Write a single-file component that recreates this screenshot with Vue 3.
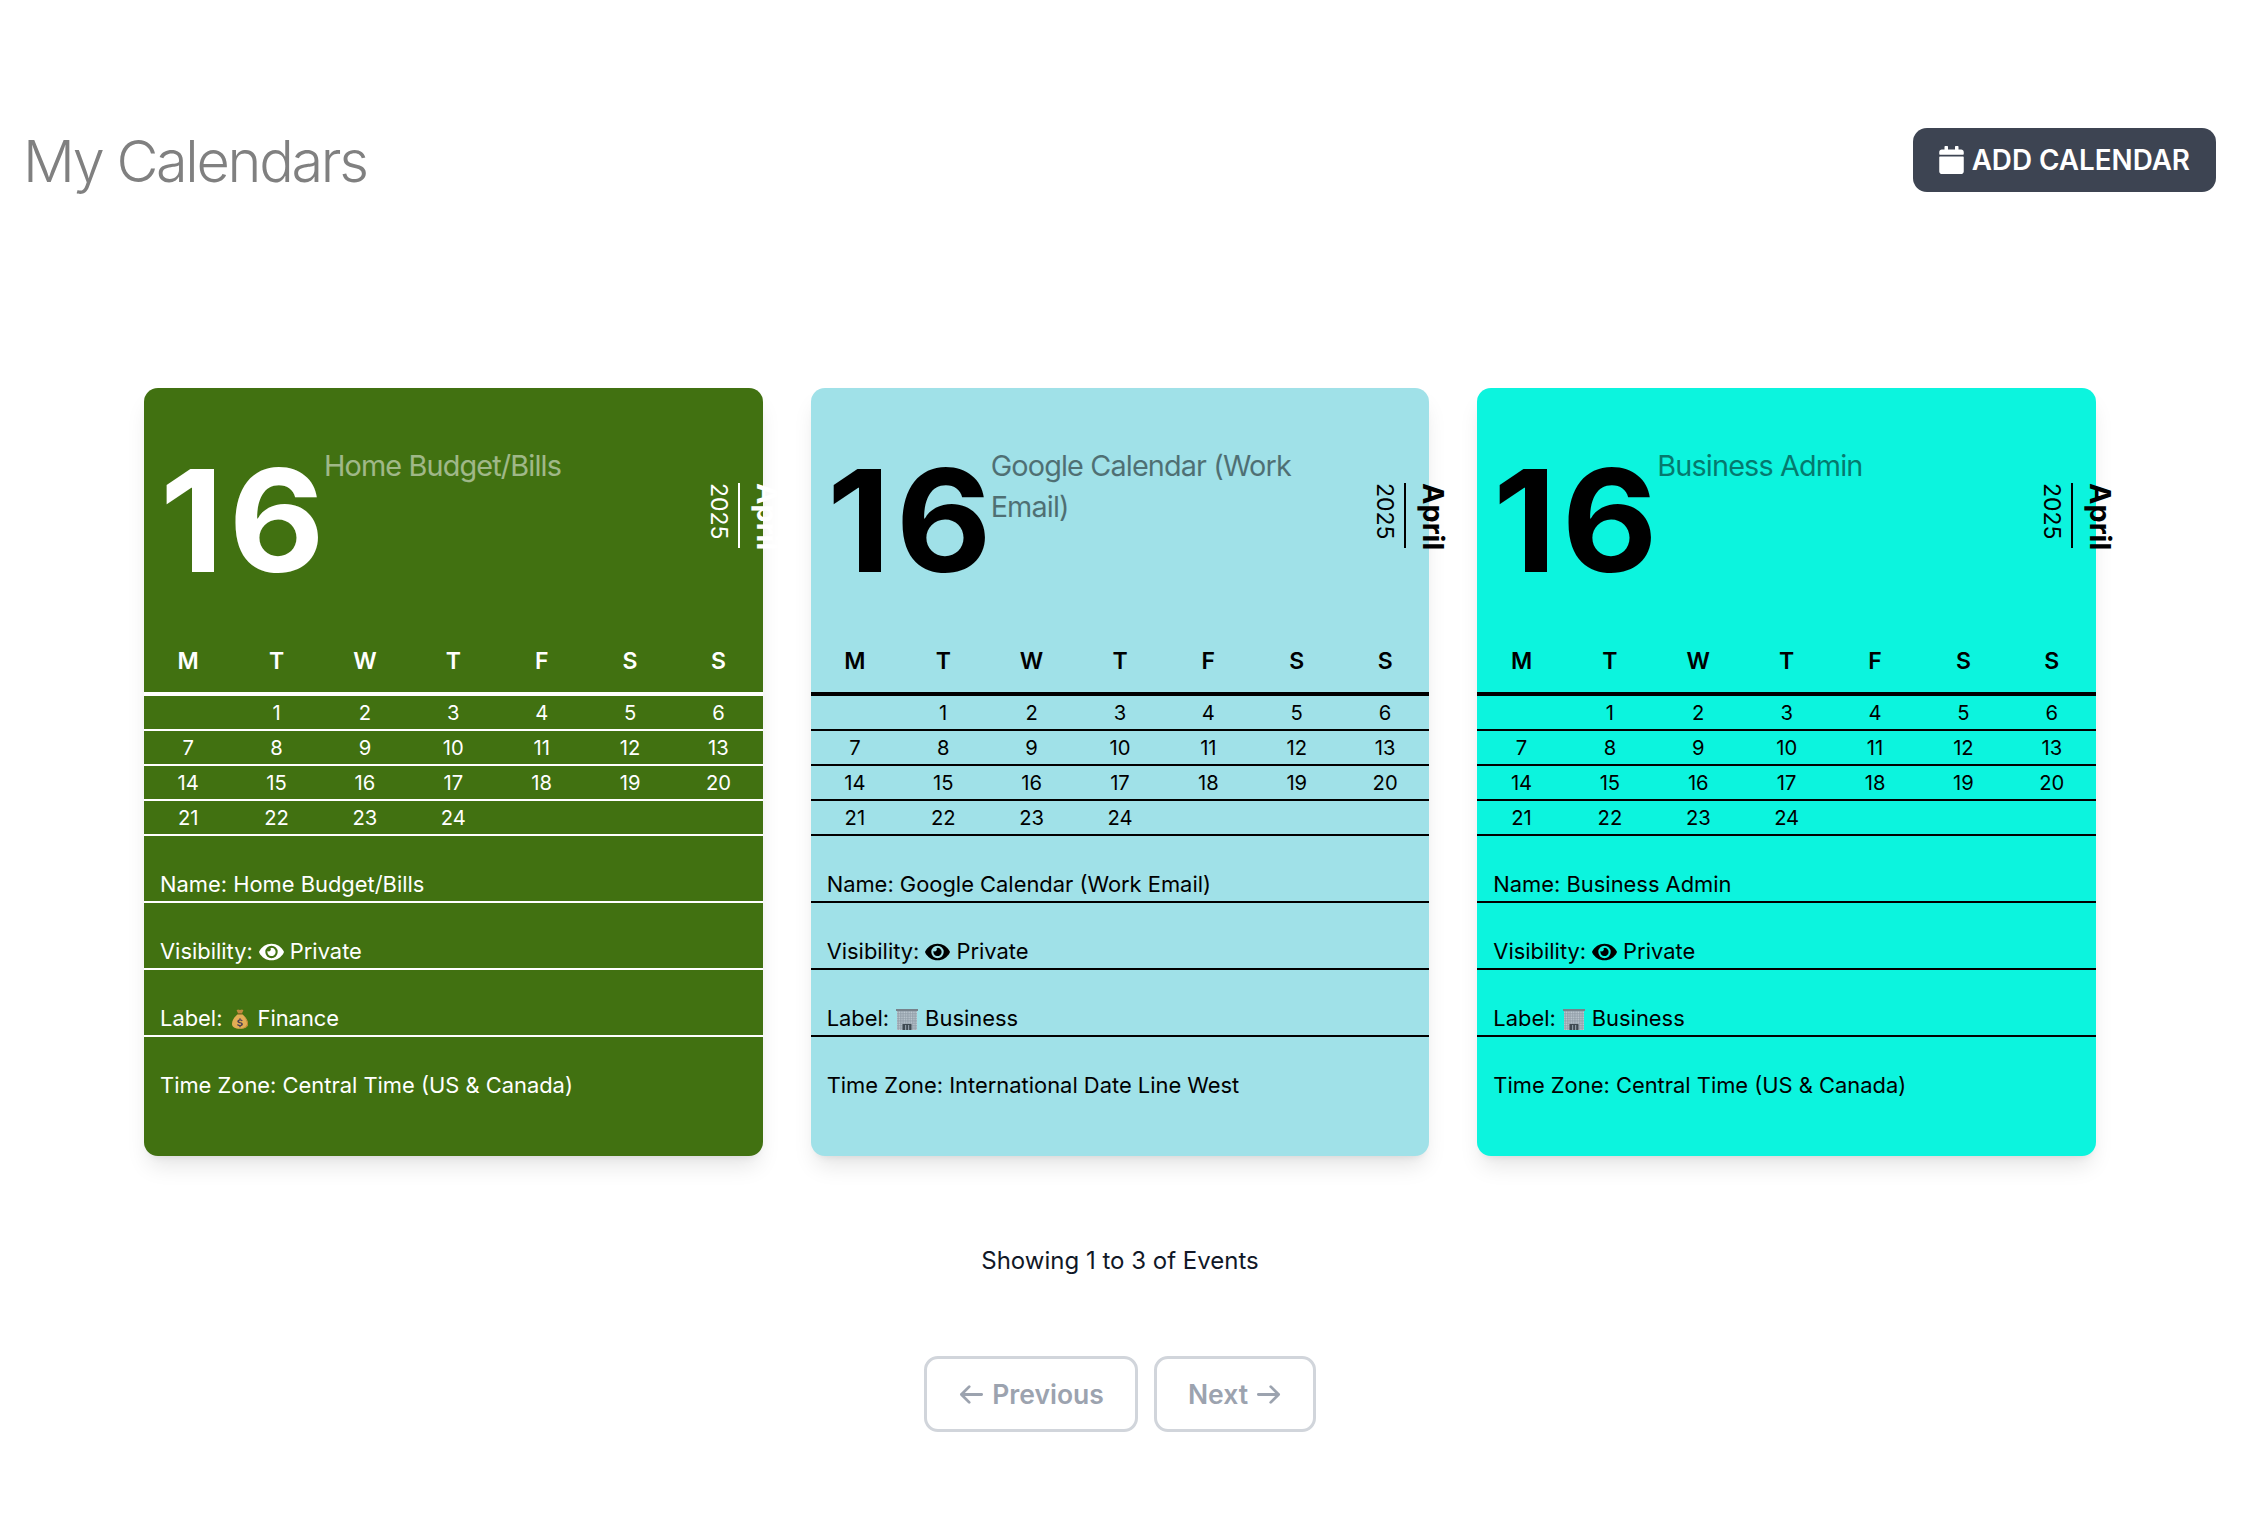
<template>
  <div class="page">
    <header class="topbar">
      <h1 class="page-title">My Calendars</h1>
      <button class="add-btn">
        <svg class="add-icon" viewBox="0 0 448 512" fill="currentColor">
          <path d="M12 192h424c6.6 0 12 5.4 12 12v260c0 26.5-21.5 48-48 48H48c-26.5 0-48-21.5-48-48V204c0-6.6 5.4-12 12-12zm436-44v-36c0-26.5-21.5-48-48-48h-48V12c0-6.6-5.4-12-12-12h-40c-6.6 0-12 5.4-12 12v52H160V12c0-6.6-5.4-12-12-12h-40c-6.6 0-12 5.4-12 12v52H48C21.5 64 0 85.5 0 112v36c0 6.6 5.4 12 12 12h424c6.6 0 12-5.4 12-12z" />
        </svg>
        ADD CALENDAR
      </button>
    </header>

    <section class="cards">
      <article
        v-for="cal in calendars"
        :key="cal.name"
        class="card"
        :class="cal.theme"
      >
        <div class="card-top">
          <div class="day-number">16</div>
          <div class="card-title">{{ cal.name }}</div>
          <div class="side-date">
            <span class="side-year">2025</span>
            <span class="side-rule"></span>
            <span class="side-month">April</span>
          </div>
        </div>

        <div class="week-head">
          <span v-for="(d, i) in weekdays" :key="i">{{ d }}</span>
        </div>
        <div class="weeks">
          <div v-for="(week, w) in weeks" :key="w" class="week">
            <span v-for="(day, i) in week" :key="i">{{ day }}</span>
          </div>
        </div>

        <div class="info">
          <div class="info-row"><span>Name: {{ cal.name }}</span></div>
          <div class="info-row">
            <span>Visibility:</span>
            <svg class="eye" viewBox="0 0 576 512" fill="currentColor">
              <path d="M572.52 241.4C518.29 135.59 410.93 64 288 64S57.68 135.64 3.48 241.41a32.35 32.35 0 0 0 0 29.19C57.71 376.41 165.07 448 288 448s230.32-71.64 284.52-177.41a32.35 32.35 0 0 0 0-29.19zM288 400a144 144 0 1 1 144-144 143.93 143.93 0 0 1-144 144zm0-240a95.31 95.31 0 0 0-25.31 3.79 47.85 47.85 0 0 1-66.9 66.9A95.78 95.78 0 1 0 288 160z" />
            </svg>
            <span>Private</span>
          </div>
          <div class="info-row">
            <span>Label:</span>
            <svg v-if="cal.label === 'Finance'" class="emoji bag" viewBox="0 0 16 20">
              <path d="M4.6 1.2 6 .4l2 .6 2-.6 1.4.8-1.5 3.2H6.100z" fill="#c08a3e" />
              <path d="M5.700 4.400h4.600l.5 1.100H5.200z" fill="#8a5a22" />
              <path d="M5.300 5.500h5.400C13.600 8 16 11.400 16 14.800c0 3.400-2.800 5-8 5s-8-1.600-8-5C0 11.400 2.400 8 5.300 5.500z" fill="#e2ad55" />
              <path d="M12 8c1.900 2 3 4.300 3 6.600 0 2.800-2.200 4.200-6 4.700 4.800-.1 7-1.700 7-4.500C16 12.600 14.400 10 12 8z" fill="#b9812f" />
              <path d="M8.600 9.300v1.100c1 .1 1.700.5 2.100 1l-.9.900c-.4-.4-.9-.7-1.700-.7-.7 0-1.100.3-1.100.7 0 .5.500.7 1.500.9 1.500.3 2.400.8 2.400 2 0 1.100-.8 1.800-2.300 2v1.100H7.400v-1.100c-1.100-.1-1.900-.6-2.400-1.200l.9-.9c.5.500 1.200.9 2 .9.900 0 1.300-.3 1.300-.8s-.5-.7-1.600-.9c-1.400-.3-2.300-.8-2.300-2 0-1 .8-1.700 2.100-1.900V9.300z" fill="#4a3f55" />
            </svg>
            <svg v-else class="emoji building" viewBox="0 0 22 21">
              <defs>
                <pattern :id="'win-' + cal.theme" width="2.400" height="2.400" patternUnits="userSpaceOnUse">
                  <rect width="2.400" height="2.400" fill="#8d9aa5" />
                  <rect x=".4" y=".4" width="1.500" height="1.500" fill="#c3ced6" />
                </pattern>
              </defs>
              <rect x="0" y="0" width="22" height="2" fill="#77828b" />
              <rect x="1" y="2" width="20" height="19" :fill="'url(#win-' + cal.theme + ')'" />
              <rect x="6.500" y="15" width="9" height="6" fill="#3f4a52" />
              <rect x="9" y="16" width="1.200" height="5" fill="#8d9aa5" />
              <rect x="12" y="16" width="1.200" height="5" fill="#8d9aa5" />
            </svg>
            <span>{{ cal.label }}</span>
          </div>
          <div class="info-row last"><span>Time Zone: {{ cal.zone }}</span></div>
        </div>
      </article>
    </section>

    <p class="showing">Showing 1 to 3 of Events</p>

    <nav class="pager">
      <button class="page-btn prev">
        <svg class="arrow" viewBox="0 0 24 24" fill="none" stroke="currentColor" stroke-width="2.500" stroke-linecap="round" stroke-linejoin="round">
          <path d="M10 19l-7-7m0 0l7-7m-7 7h18" />
        </svg>
        Previous
      </button>
      <button class="page-btn next">
        Next
        <svg class="arrow" viewBox="0 0 24 24" fill="none" stroke="currentColor" stroke-width="2.500" stroke-linecap="round" stroke-linejoin="round">
          <path d="M14 5l7 7m0 0l-7 7m7-7H3" />
        </svg>
      </button>
    </nav>
  </div>
</template>

<script setup>
const weekdays = ['M', 'T', 'W', 'T', 'F', 'S', 'S']

const weeks = [
  ['', 1, 2, 3, 4, 5, 6],
  [7, 8, 9, 10, 11, 12, 13],
  [14, 15, 16, 17, 18, 19, 20],
  [21, 22, 23, 24, '', '', ''],
]

const calendars = [
  { name: 'Home Budget/Bills', theme: 'green', label: 'Finance', zone: 'Central Time (US & Canada)' },
  { name: 'Google Calendar (Work Email)', theme: 'sky', label: 'Business', zone: 'International Date Line West' },
  { name: 'Business Admin', theme: 'aqua', label: 'Business', zone: 'Central Time (US & Canada)' },
]
</script>

<style>
html,
body {
  margin: 0;
  background: #fff;
}
</style>

<style scoped>
.page {
  width: 2260px;
  height: 1528px;
  overflow: hidden;
  font-family: Inter, "Noto Sans", sans-serif;
  color: #111827;
}

.topbar {
  display: flex;
  align-items: center;
  justify-content: space-between;
  padding: 128px 44px 0 23px;
}

.page-title {
  margin: 0;
  padding-top: 2px;
  font-size: 57.6px;
  line-height: 62px;
  font-weight: 300;
  letter-spacing: -2.3px;
  color: #808080;
}

.add-btn {
  display: inline-flex;
  align-items: center;
  gap: 8px;
  height: 64px;
  padding: 0 26px;
  border: 0;
  border-radius: 14px;
  background: #3d4452;
  color: #fff;
  font: 600 27.800px Inter, sans-serif;
}

.add-icon {
  width: 25px;
  height: 28px;
}

.cards {
  display: grid;
  grid-template-columns: repeat(3, 1fr);
  gap: 48px;
  width: 1952px;
  margin: 196px 0 0 144px;
}

.card {
  height: 768px;
  border-radius: 14px;
  box-shadow: 0 14px 22px -4px rgba(0, 0, 0, 0.1), 0 6px 9px -6px rgba(0, 0, 0, 0.1);
}

.green {
  background: #417111;
  color: #fff;
}

.sky {
  background: #a0e1e8;
  color: #000;
}

.aqua {
  background: #0cf4de;
  color: #000;
}

.card-top {
  display: flex;
  align-items: flex-start;
  height: 240px;
  box-sizing: border-box;
  padding: 57px 0 0 16px;
}

.day-number {
  flex: none;
  width: 164px;
  margin-top: 4px;
  font-size: 142px;
  line-height: 1;
  font-weight: 700;
  letter-spacing: 5px;
  transform: scaleX(1.04);
  transform-origin: left center;
}

.card-title {
  flex: none;
  width: 330px;
  font-size: 28.800px;
  line-height: 41px;
  letter-spacing: -0.85px;
  opacity: 0.5;
}

.side-date {
  display: flex;
  flex: none;
  align-items: flex-start;
  margin: 38px -21px 0 auto;
}

.side-year,
.side-month {
  writing-mode: vertical-rl;
  white-space: nowrap;
}

.side-year {
  font-size: 23px;
  line-height: 24px;
}

.side-rule {
  width: 2px;
  height: 65px;
  margin: 0 10px 0 7px;
  background: currentColor;
}

.side-month {
  font-size: 28.800px;
  line-height: 34px;
  font-weight: 700;
}

.week-head,
.week {
  display: grid;
  grid-template-columns: repeat(7, 1fr);
  text-align: center;
}

.week-head {
  height: 64px;
  box-sizing: border-box;
  padding-top: 2px;
  align-items: center;
  font-size: 23px;
  font-weight: 600;
}

.weeks {
  border-top: 4px solid currentColor;
}

.week {
  box-sizing: border-box;
  height: 35px;
  border-bottom: 2px solid currentColor;
  font-size: 20.200px;
  line-height: 33px;
}

.info-row {
  display: flex;
  align-items: flex-end;
  gap: 6px;
  box-sizing: border-box;
  height: 67px;
  padding: 0 16px 2px;
  border-bottom: 2px solid currentColor;
  font-size: 21.900px;
  line-height: 29px;
}

.info-row.last {
  border-bottom: 0;
  padding-bottom: 4px;
}

.eye {
  width: 25px;
  height: 22px;
  margin-bottom: 3px;
}

.emoji.bag {
  width: 16px;
  height: 20px;
  margin: 0 3px 4px 4px;
}

.emoji.building {
  width: 22px;
  height: 21px;
  margin: 0 1px 3px;
}

.showing {
  margin: 88px 0 0;
  width: 2240px;
  text-align: center;
  font-size: 24px;
  line-height: 34px;
}

.pager {
  display: flex;
  justify-content: center;
  gap: 16px;
  width: 2240px;
  margin-top: 78px;
}

.page-btn {
  display: inline-flex;
  align-items: center;
  justify-content: center;
  gap: 7px;
  box-sizing: border-box;
  height: 76px;
  border: 3px solid #d1d5db;
  border-radius: 14px;
  background: #fff;
  color: #9ca3af;
  font: 600 26.500px Inter, sans-serif;
}

.prev {
  width: 214px;
}

.next {
  width: 162px;
}

.arrow {
  width: 27px;
  height: 27px;
}
</style>
